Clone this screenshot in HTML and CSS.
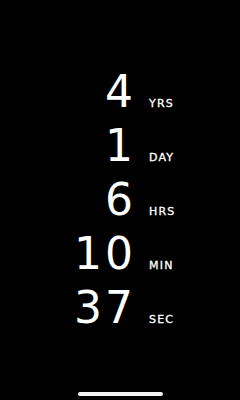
FILE: index.html
```html
<!DOCTYPE html>
<html lang="en">
<head>
    <meta charset="UTF-8">
    <meta name="viewport" content="width=device-width, initial-scale=1.0">
    <title>Time Together</title>
    <link rel="stylesheet" href="styles.css">
</head>
<body>
    <div class="screen">
        <div class="counter">
            <div class="row"><span class="num">4</span><span class="unit">YRS</span></div>
            <div class="row"><span class="num">1</span><span class="unit">DAY</span></div>
            <div class="row"><span class="num">6</span><span class="unit">HRS</span></div>
            <div class="row"><span class="num">10</span><span class="unit">MIN</span></div>
            <div class="row"><span class="num">37</span><span class="unit">SEC</span></div>
        </div>
        <div class="home-bar"></div>
    </div>
</body>
</html>
```

FILE: styles.css
```css
html, body {
    margin: 0;
    padding: 0;
    background: #000;
}
.screen {
    width: 240px;
    height: 400px;
    display: flex;
    flex-direction: column;
    font-family: 'DejaVu Sans', sans-serif;
    color: #fff;
    box-sizing: border-box;
    padding-top: 65px;
}
.counter {
    display: flex;
    flex-direction: column;
}
.row {
    display: flex;
    align-items: baseline;
    height: 54px;
}
.num {
    width: 136px;
    margin-right: -3px;
    text-align: right;
    font-size: 44px;
    line-height: 54px;
    letter-spacing: 3px;
    font-weight: 400;
}
.unit {
    margin-left: 16px;
    font-size: 11px;
    font-weight: 400;
    letter-spacing: 1.2px;
    -webkit-text-stroke: 0.3px #fff;
}
.home-bar {
    margin: auto auto 4px;
    width: 85px;
    height: 4px;
    border-radius: 2px;
    background: #f2f2f2;
}
```
